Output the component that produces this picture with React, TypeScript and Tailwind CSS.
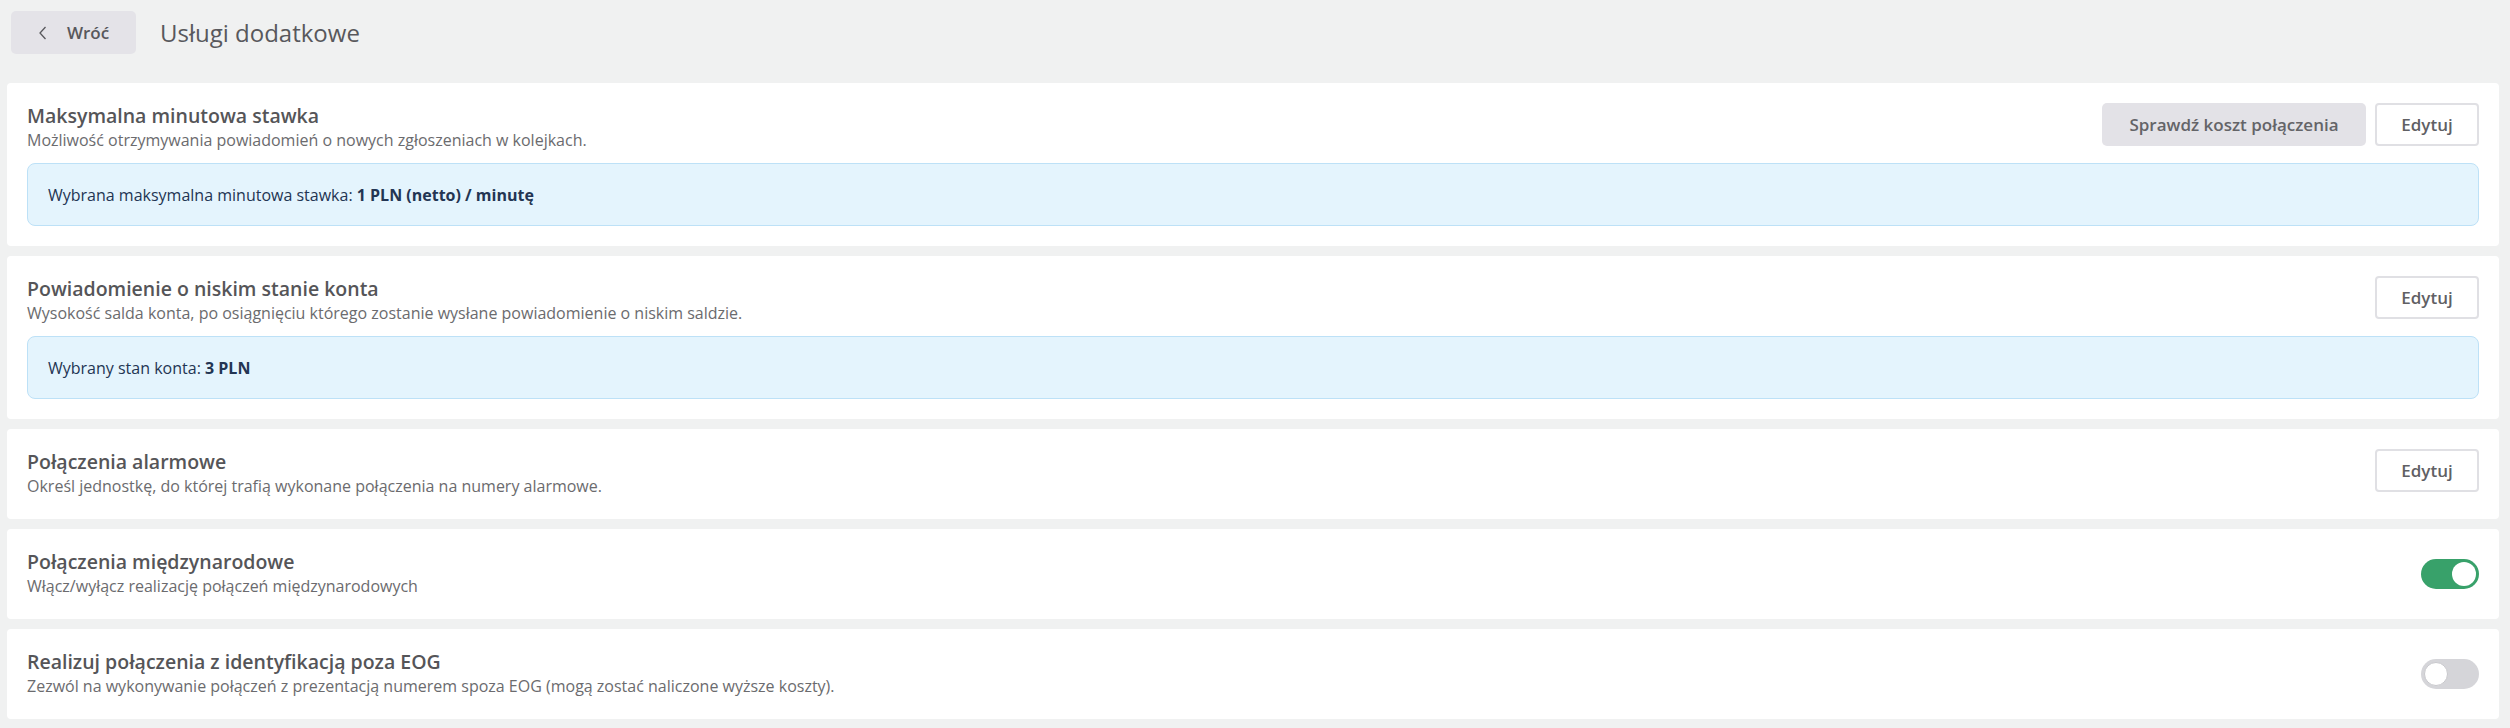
import React, { useState } from 'react';

interface ServiceCardProps {
  title: string;
  description: string;
  actions?: React.ReactNode;
  children?: React.ReactNode;
  center?: boolean;
}

// Single settings card with header row and optional info box
const ServiceCard: React.FC<ServiceCardProps> = ({ title, description, actions, children, center }) => (
  <div className="bg-white rounded-[4px] px-5 py-5">
    <div className={`flex justify-between ${center ? 'items-center' : 'items-start'}`}>
      <div className="flex flex-col">
        <h3 className="text-[19.5px] leading-[25px] font-semibold text-[#555558]">{title}</h3>
        <p className="text-[16px] leading-[25px] text-[#6b6b6e]">{description}</p>
      </div>
      {actions && <div className="flex items-center gap-[9px]">{actions}</div>}
    </div>
    {children}
  </div>
);

const InfoBox: React.FC<{ label: string; value: string }> = ({ label, value }) => (
  <div className="mt-[10px] h-[63px] flex items-center px-5 bg-[#e4f4fd] border border-[#bde1f7] rounded-[8px] text-[16px] text-[#233553]">
    <span>{label}:&nbsp;</span>
    <span className="font-bold">{value}</span>
  </div>
);

const EditButton: React.FC = () => (
  <button className="h-[43px] w-[104px] bg-white border-2 border-[#e0e0e4] rounded-[4px] text-[17px] font-semibold text-[#606064]">
    Edytuj
  </button>
);

const Toggle: React.FC<{ on: boolean; onChange: () => void }> = ({ on, onChange }) => (
  <button
    onClick={onChange}
    className={`relative w-[58px] h-[30px] rounded-full flex items-center px-[3px] ${on ? 'bg-[#38a16a] justify-end' : 'bg-[#d5d5d9] justify-start'}`}
  >
    <span className={`block w-[24px] h-[24px] rounded-full bg-white ${on ? '' : 'border border-[#c8c8cc]'}`} />
  </button>
);

const App: React.FC = () => {
  const [international, setInternational] = useState(true);
  const [outsideEog, setOutsideEog] = useState(false);

  return (
    <div className="min-h-screen bg-[#f0f1f1] font-['Open_Sans',sans-serif] pb-[10px]">
      <div className="flex items-center gap-[24px] pt-[11px] pl-[11px]">
        <button className="h-[43px] w-[125px] flex items-center justify-center gap-[19px] bg-[#e4e3e8] rounded-[5px] text-[17px] font-semibold text-[#58585c]">
          <svg width="10" height="14" viewBox="0 0 10 14" fill="none" stroke="#58585c" strokeWidth="1.3">
            <path d="M7.5 1 L2 7 L7.5 13" />
          </svg>
          <span>Wróć</span>
        </button>
        <h1 className="text-[24px] text-[#58585c]">Usługi dodatkowe</h1>
      </div>

      <div className="mt-[29px] ml-[7px] mr-[11px] flex flex-col gap-[10px]">
        <ServiceCard
          title="Maksymalna minutowa stawka"
          description="Możliwość otrzymywania powiadomień o nowych zgłoszeniach w kolejkach."
          actions={
            <>
              <button className="h-[43px] w-[264px] bg-[#e3e2e7] rounded-[5px] text-[17px] font-semibold text-[#646468]">
                Sprawdź koszt połączenia
              </button>
              <EditButton />
            </>
          }
        >
          <InfoBox label="Wybrana maksymalna minutowa stawka" value="1 PLN (netto) / minutę" />
        </ServiceCard>

        <ServiceCard
          title="Powiadomienie o niskim stanie konta"
          description="Wysokość salda konta, po osiągnięciu którego zostanie wysłane powiadomienie o niskim saldzie."
          actions={<EditButton />}
        >
          <InfoBox label="Wybrany stan konta" value="3 PLN" />
        </ServiceCard>

        <ServiceCard
          title="Połączenia alarmowe"
          description="Określ jednostkę, do której trafią wykonane połączenia na numery alarmowe."
          actions={<EditButton />}
        />

        <ServiceCard
          title="Połączenia międzynarodowe"
          description="Włącz/wyłącz realizację połączeń międzynarodowych"
          center
          actions={<Toggle on={international} onChange={() => setInternational(!international)} />}
        />

        <ServiceCard
          title="Realizuj połączenia z identyfikacją poza EOG"
          description="Zezwól na wykonywanie połączeń z prezentacją numerem spoza EOG (mogą zostać naliczone wyższe koszty)."
          center
          actions={<Toggle on={outsideEog} onChange={() => setOutsideEog(!outsideEog)} />}
        />
      </div>
    </div>
  );
};

export default App;
